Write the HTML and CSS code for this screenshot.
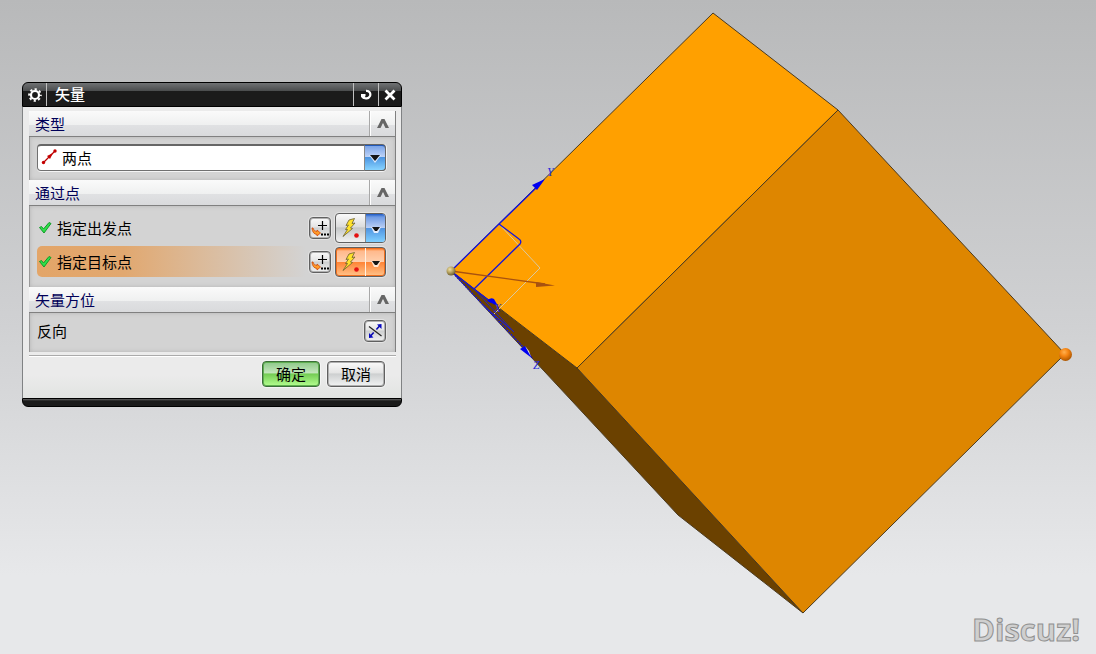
FILE: index.html
```html
<!DOCTYPE html>
<html lang="zh-CN">
<head>
<meta charset="utf-8">
<title>矢量</title>
<meta name="viewport" content="width=device-width, initial-scale=1">
<link rel="stylesheet" href="styles.css">
</head>
<body>
<main class="viewport">
  <svg class="scene" viewBox="0 0 1096 654" preserveAspectRatio="xMinYMin meet" role="img" aria-label="长方体模型">
    <defs>
      <radialGradient id="ball-orange" cx="40%" cy="32%" r="70%">
        <stop offset="0" stop-color="#ffb050"/><stop offset=".45" stop-color="#f58412"/><stop offset="1" stop-color="#a85400"/>
      </radialGradient>
      <radialGradient id="ball-tan" cx="38%" cy="32%" r="70%">
        <stop offset="0" stop-color="#eee0a8"/><stop offset=".5" stop-color="#b8a460"/><stop offset="1" stop-color="#6a5c30"/>
      </radialGradient>
    </defs>
    <g stroke="#4a3a20" stroke-width="1" stroke-linejoin="round">
      <path d="M451 271 577 368 803 613 678 515Z" fill="#6b4100"/>
      <path d="M451 271 713 13 838 110 577 368Z" fill="#ffa000"/>
      <path d="M577 368 838 110 1065 354 803 613Z" fill="#de8600"/>
    </g>
    <g fill="none" stroke-width="1">
      <path d="M499 224 540 268 494 314" stroke="#d8c8a0"/>
      <path d="M451 271 499 224 538 186M499 224 519 239Q522 241 520 244L474 289M451 271 474 289 491 302" stroke="#1414dc" stroke-width="1.300"/>
      <path d="M451 271 526 350" stroke="#1414dc" stroke-width="1.300" stroke-dasharray="2 1"/>
      <path d="M474 289 514 332 482 304M492 313 510 329" stroke="#2020c8"/>
      <path d="M538 186 556 168" stroke="#8c7440"/>
    </g>
    <path d="M545 179 532 185 537 190Z" fill="#0000f0"/>
    <path d="M487 301Q490 297 494 299L498 306Z" fill="#0000f0"/>
    <path d="M520 349 525 346 533 359Z" fill="#0000f0"/>
    <path d="M525 346 529 351 531 357Z" fill="#dfe1e8"/>
    <path d="M451 271 545 284" stroke="#a85210" stroke-width="1.400" fill="none"/>
    <path d="M536 282 555 285.500 536 287Z" fill="#a85210"/>
    <g class="axis-label">
      <text x="547" y="176">Y</text>
      <text x="494" y="312">X</text>
      <text x="533" y="369">Z</text>
    </g>
    <circle cx="451" cy="271" r="4.500" fill="url(#ball-tan)"/>
    <circle cx="1065.500" cy="354.500" r="6.500" fill="url(#ball-orange)"/>
    <text class="watermark" x="972" y="641">Discuz!</text>
  </svg>

  <form class="dialog" aria-labelledby="dialog-title">
    <header class="titlebar">
      <button class="title-btn title-btn--gear" type="button" aria-label="选项">
        <svg width="14" height="14" viewBox="0 0 14 14"><g fill="none" stroke="#fff"><circle cx="7" cy="7" r="4" stroke-width="2.200"/><circle cx="7" cy="7" r="5.800" stroke-width="2" stroke-dasharray="2.200 2.355" stroke-dashoffset="1.100"/></g></svg>
      </button>
      <h1 class="title" id="dialog-title">矢量</h1>
      <button class="title-btn" type="button" aria-label="重置">
        <svg width="12" height="12" viewBox="0 0 12 12"><path d="M6 1.800C9.500 1.500 11 4.500 10 7 8.800 9.600 5 10.300 2.500 8" fill="none" stroke="#fff" stroke-width="2.200"/><path d="M1 5H5.500V7L3.500 10 1 8Z" fill="#fff"/></svg>
      </button>
      <button class="title-btn title-btn--close" type="button" aria-label="关闭">
        <svg width="12" height="12" viewBox="0 0 12 12"><path d="M1.500 1.500 10.500 10.500M10.500 1.500 1.500 10.500" stroke="#fff" stroke-width="2.800"/></svg>
      </button>
    </header>

    <div class="content">
      <section class="group">
        <div class="group-head">
          <h2 class="group-title">类型</h2>
          <button class="collapse" type="button" aria-label="折叠类型"><svg width="12" height="9" viewBox="0 0 12 9"><path d="M0 9 4.500 0H7.500L12 9H8.500L6 4 3.500 9Z" fill="#666"/></svg></button>
        </div>
        <div class="group-body">
          <div class="combo">
            <svg class="combo-icon" width="16" height="16" viewBox="0 0 16 16"><path d="M2 14 14 2" stroke="#b80000" stroke-width="1.200"/><path d="M6 7 12 4 9 10Z" fill="#c40000"/><circle cx="2.500" cy="13.500" r="1.700" fill="#c40000"/><circle cx="14" cy="2" r="1.700" fill="#c40000"/></svg>
            <select class="combo-select" aria-label="类型"><option>两点</option></select>
            <span class="combo-arrow"><svg width="12" height="8" viewBox="0 0 12 8"><path d="M0 0H12L6 8Z" fill="#dceaff"/><path d="M1 0H11L6 6Z" fill="#141414"/></svg></span>
          </div>
        </div>
      </section>

      <section class="group">
        <div class="group-head">
          <h2 class="group-title">通过点</h2>
          <button class="collapse" type="button" aria-label="折叠通过点"><svg width="12" height="9" viewBox="0 0 12 9"><path d="M0 9 4.500 0H7.500L12 9H8.500L6 4 3.500 9Z" fill="#666"/></svg></button>
        </div>
        <div class="group-body group-body--points">
          <div class="row">
            <svg class="check" width="14" height="13" viewBox="0 0 14 13"><path d="M1.500 6.500 3.500 5.500 5.500 8 11 1.500 13 2.500 6 12Z" fill="#2ee04a" stroke="#129a28"/></svg>
            <span class="row-label">指定出发点</span>
            <button class="icon-btn" type="button" aria-label="出发点构造器">
              <svg width="18" height="18" viewBox="0 0 18 18"><path d="M11.500 2V11M7 6.500H16" stroke="#000" stroke-width="1.200"/><path d="M2 9Q2.500 12.500 6 12.500V11L9.500 14 6 17V15.500Q1.500 15 1 9Z" fill="#ff9c28" stroke="#d04808" stroke-width=".8"/><path d="M10 14.500h2v2h-2zM13 14.500h2v2h-2zM16 14.500h2v2h-2z"/></svg>
            </button>
            <span class="split">
              <button class="split-main" type="button" aria-label="自动判断出发点"><svg width="22" height="24" viewBox="0 0 22 24"><path d="M9 4 14.500 2.500 12 7.500 15 7 10.500 12 12.500 12.500 3 20.500 7.500 13.500 5.500 13.500 8.500 9 6 9.500Z" fill="#ffe22c" stroke="#6a6030" stroke-width=".8"/><circle cx="16.500" cy="19.500" r="2.300" fill="#e41010"/></svg></button>
              <button class="split-arrow" type="button" aria-label="出发点类型"><svg width="10" height="6" viewBox="0 0 10 6"><path d="M0 0H10L7 6H3Z" fill="#e4edff"/><path d="M1 0H9L6 4H4Z" fill="#141414"/></svg></button>
            </span>
          </div>
          <div class="row row--active">
            <svg class="check" width="14" height="13" viewBox="0 0 14 13"><path d="M1.500 6.500 3.500 5.500 5.500 8 11 1.500 13 2.500 6 12Z" fill="#2ee04a" stroke="#129a28"/></svg>
            <span class="row-label">指定目标点</span>
            <button class="icon-btn" type="button" aria-label="目标点构造器">
              <svg width="18" height="18" viewBox="0 0 18 18"><path d="M11.500 2V11M7 6.500H16" stroke="#000" stroke-width="1.200"/><path d="M2 9Q2.500 12.500 6 12.500V11L9.500 14 6 17V15.500Q1.500 15 1 9Z" fill="#ff9c28" stroke="#d04808" stroke-width=".8"/><path d="M10 14.500h2v2h-2zM13 14.500h2v2h-2zM16 14.500h2v2h-2z"/></svg>
            </button>
            <span class="split split--active">
              <button class="split-main" type="button" aria-label="自动判断目标点"><svg width="22" height="24" viewBox="0 0 22 24"><path d="M9 4 14.500 2.500 12 7.500 15 7 10.500 12 12.500 12.500 3 20.500 7.500 13.500 5.500 13.500 8.500 9 6 9.500Z" fill="#ffe22c" stroke="#6a6030" stroke-width=".8"/><circle cx="16.500" cy="19.500" r="2.300" fill="#e41010"/></svg></button>
              <button class="split-arrow" type="button" aria-label="目标点类型"><svg width="10" height="6" viewBox="0 0 10 6"><path d="M0 0H10L7 6H3Z" fill="#ffe6d2"/><path d="M1 0H9L6 4H4Z" fill="#141414"/></svg></button>
            </span>
          </div>
        </div>
      </section>

      <section class="group">
        <div class="group-head">
          <h2 class="group-title">矢量方位</h2>
          <button class="collapse" type="button" aria-label="折叠矢量方位"><svg width="12" height="9" viewBox="0 0 12 9"><path d="M0 9 4.500 0H7.500L12 9H8.500L6 4 3.500 9Z" fill="#666"/></svg></button>
        </div>
        <div class="group-body group-body--direction">
          <span class="row-label">反向</span>
          <button class="icon-btn" type="button" aria-label="反向">
            <svg width="16" height="16" viewBox="0 0 16 16"><path d="M2 3.500 14.500 13" stroke="#222" stroke-width="1.200"/><path d="M3 13.500 13 2.500" stroke="#0808b0" stroke-width="1.600" stroke-dasharray="5.500 4"/><path d="M14.500 1V6L10 1.500ZM2 15V10L6.500 14.500Z" fill="#0808c0"/></svg>
          </button>
        </div>
      </section>

      <div class="actions">
        <button class="btn btn--ok" type="submit">确定</button>
        <button class="btn" type="button">取消</button>
      </div>
    </div>
    <div class="dialog-foot"></div>
  </form>
</main>
</body>
</html>
```
FILE: styles.css
```css
* {
  box-sizing: border-box;
}

body {
  margin: 0;
  font: 15px/20px "Noto Sans CJK SC", "Open Sans", sans-serif;
  color: #000;
}

button,
select {
  margin: 0;
  padding: 0;
  font: inherit;
  color: inherit;
}

svg {
  display: block;
  flex: none;
}

.viewport {
  position: relative;
  min-height: 100vh;
  background: linear-gradient(#b8b9ba, #d0d1d3 50%, #e7e8ea 88%, #e7e8ea);
  overflow: hidden;
}

.scene {
  width: 100%;
  height: auto;
}

.axis-label {
  font: italic 12px "Liberation Serif", serif;
  fill: #2a2ad8;
}

.watermark {
  font: bold 31px "Open Sans", sans-serif;
  fill: #cfcfcf;
  stroke: #909090;
  stroke-width: 1px;
}

.dialog {
  position: absolute;
  left: 22px;
  top: 82px;
  width: 380px;
  display: flex;
  flex-direction: column;
}

.titlebar {
  display: flex;
  align-items: stretch;
  height: 25px;
  border: 1px solid #000;
  border-radius: 6px 6px 0 0;
  background: linear-gradient(#707274, #4a4c4d 8px, #1b1b1b 8px);
  color: #fff;
  overflow: hidden;
}

.title {
  flex: 1;
  margin: 0;
  padding-left: 8px;
  font-size: 15px;
  font-weight: 500;
  line-height: 22px;
}

.title-btn {
  display: flex;
  align-items: center;
  justify-content: center;
  width: 25px;
  border: 0;
  border-left: 1px solid #c0c0c0;
  background: none;
}

.title-btn--gear {
  border-left: 0;
  border-right: 1px solid #c0c0c0;
  width: 24px;
}

.title-btn--close {
  width: 23px;
}

.content {
  padding: 4px 5px 11px 6px;
  border: solid #808284;
  border-width: 0 1px;
  background: linear-gradient(#ebebeb 92%, #e2e4e2);
}

.group {
  border-right: 1px solid #808080;
}

.group-head {
  display: flex;
  height: 26px;
  border-bottom: 1px solid #808080;
  background: linear-gradient(#fafafa, #eff0f0 14px, #e0e1e3 14px, #d9dadc);
}

.group-title {
  flex: 1;
  margin: 0;
  padding-left: 6px;
  font-size: 15px;
  font-weight: 400;
  line-height: 26px;
  color: #000058;
}

.collapse {
  display: flex;
  align-items: center;
  justify-content: center;
  width: 26px;
  border: 0;
  border-left: 1px solid #a8a8a8;
  box-shadow: inset 1px 0 #fff;
  background: none;
}

.group-body {
  padding: 7px 9px 9px 7px;
  border-left: 1px solid #999;
  background: #d3d3d3;
  box-shadow: inset 0 0 4px #b4b4b4;
}

.combo {
  position: relative;
}

.combo-icon {
  position: absolute;
  left: 4px;
  top: 5px;
  pointer-events: none;
}

.combo-select {
  display: block;
  appearance: none;
  width: 100%;
  height: 27px;
  padding: 0 28px 1px 24px;
  border: 1px solid #707070;
  border-top: 2px solid #666;
  border-radius: 4px;
  background: #fff;
  box-shadow: 0 1px #f4f4f4, 1px 0 #f4f4f4;
}

.combo-arrow {
  position: absolute;
  right: 0;
  top: 1px;
  bottom: 0;
  width: 22px;
  display: flex;
  align-items: center;
  justify-content: center;
  padding-top: 1px;
  border: 1px solid #2259b8;
  border-left-color: #888;
  border-right-color: #666;
  border-bottom-color: #666;
  border-radius: 0 4px 4px 0;
  background: linear-gradient(#7aa4e8, #bfd3f6 11px, #4a92e0 11px, #88d4ff);
  pointer-events: none;
}

.group-body--points {
  display: flex;
  flex-direction: column;
  gap: 3px;
  padding: 6px 9px 10px 7px;
}

.row {
  display: flex;
  align-items: center;
  height: 31px;
  padding-left: 1px;
  border-radius: 5px;
}

.row--active {
  background: linear-gradient(90deg, #e3a568, #e1a870 25%, #d3d3d3 77%);
}

.row-label {
  flex: 1;
}

.check {
  margin-right: 5px;
}

.icon-btn {
  display: flex;
  align-items: center;
  justify-content: center;
  width: 22px;
  height: 22px;
  border: 1px solid #606060;
  border-radius: 4px;
  background: linear-gradient(#fafafa, #e4e4e4 45%, #cdcfd0 50%, #f0f1f1);
  box-shadow: inset 0 0 0 1px #b0b0b0, 0 0 0 1px #e4e4e4;
}

.split {
  display: flex;
  width: 51px;
  height: 30px;
  margin-left: 4px;
  border: 1px solid #606060;
  border-radius: 4px;
  background: linear-gradient(#fafafa, #dcdcdc 45%, #c5c7c8 50%, #f2f2f2);
  box-shadow: 0 0 0 1px #e4e4e4;
  overflow: hidden;
}

.split-main,
.split-arrow {
  display: flex;
  align-items: center;
  justify-content: center;
  border: 0;
  background: none;
}

.split-main {
  flex: 1;
}

.split-arrow {
  width: 20px;
  border-left: 1px solid #8a8a8a;
  padding-top: 5px;
  background: linear-gradient(#1c58c4, #6f9be4 3px, #bcd0f4 14px, #4f92e0 14px, #80d0ff);
}

.split--active {
  background: linear-gradient(#ff6a00, #ffb98c 3px, #ffd0ae 14px, #ff8334 14px, #ffc48c);
  box-shadow: inset 0 0 0 1px #f07020, 0 0 0 1px #e4e4e4;
}

.split--active .split-arrow {
  border-left-color: #fff0e0;
  background: none;
}

.group-body--direction {
  display: flex;
  align-items: center;
  padding: 7px 9px 10px 7px;
}

.actions {
  display: flex;
  justify-content: flex-end;
  gap: 7px;
  margin-top: 3px;
  padding: 5px 11px 0 0;
  border-top: 1px solid #aaa;
  box-shadow: inset 0 1px #fff;
}

.btn {
  width: 58px;
  height: 26px;
  border: 1px solid #606060;
  border-radius: 4px;
  background: linear-gradient(#fafafa, #e4e4e4 45%, #cdcfd0 50%, #f2f3f3);
  box-shadow: inset 0 0 0 1px #b0b0b0, 0 0 0 1px #f4f4f4;
  line-height: 20px;
}

.btn--ok {
  border-color: #3a6e38;
  background: linear-gradient(#8cc888, #c4e6bc 45%, #74cc54 50%, #b4ff90);
  box-shadow: inset 0 0 0 1px #5fae50, 0 0 0 1px #f4f4f4;
}

.dialog-foot {
  height: 9px;
  border: 1px solid #000;
  border-radius: 0 0 6px 6px;
  background: linear-gradient(#666, #1b1b1b 2px);
}
```
